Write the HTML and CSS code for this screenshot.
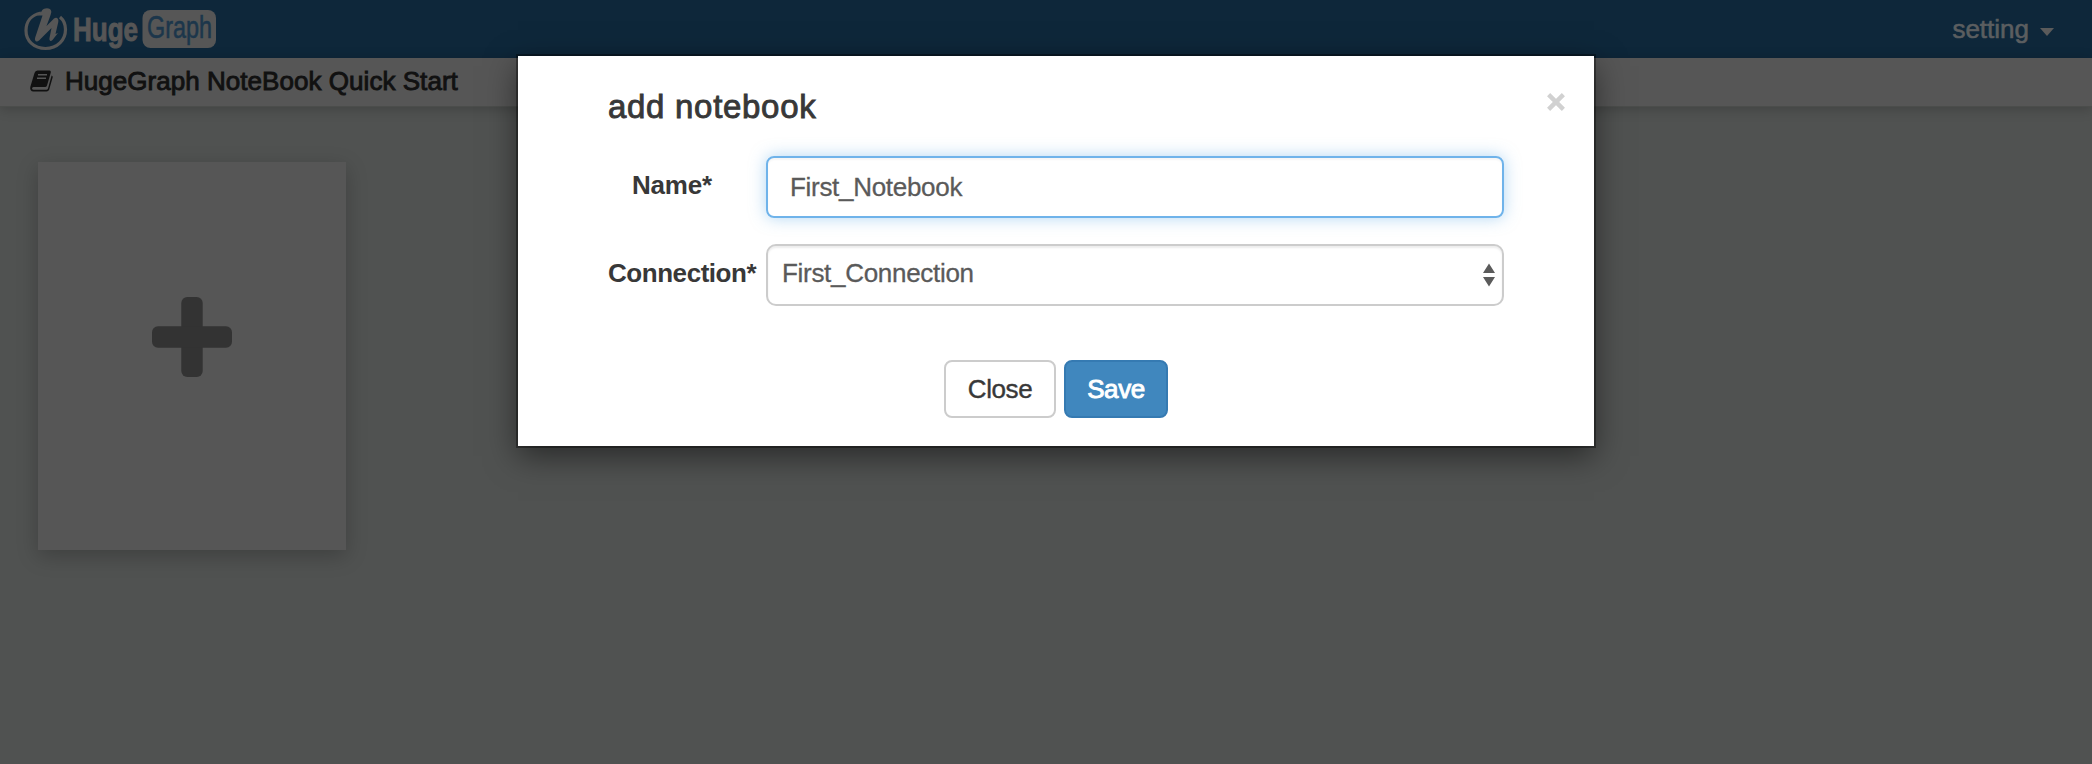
FILE: index.html
```html
<!DOCTYPE html>
<html lang="en">
<head>
<meta charset="utf-8">
<title>HugeGraph NoteBook</title>
<link rel="stylesheet" href="styles.css">
</head>
<body>
<header class="navbar">
  <svg class="logo" viewBox="0 0 200 44" role="img" aria-label="HugeGraph">
    <path d="M17 6C7 8 2 15 2 23.500C2 34 10 41.500 21.500 41.500C33.500 41.500 41.500 33 41.500 22.500C41.500 17 39.500 13 36 10" fill="none" stroke="#565656" stroke-width="3.200"/>
    <path d="M13 8.500C15.500 7.500 17 5.500 18 3.500C20 .5 27 .2 27.300 4.500C27.400 7 25 12 22.500 19L30 11.500C32.500 9.500 35 11.500 34.300 15L31.500 27L34 26L28.500 33C26.500 35 25 33.500 25.500 31L27.500 21L15 33.500C12.500 35.500 10 34 11.200 30.500L18.500 8.500Z" fill="#565656"/>
    <text class="logo-huge" x="49" y="34" textLength="65" lengthAdjust="spacingAndGlyphs">Huge</text>
    <rect x="118.500" y="3" width="73.500" height="38" rx="8" fill="#565656"/>
    <text class="logo-graph" x="123" y="31" textLength="65" lengthAdjust="spacingAndGlyphs">Graph</text>
  </svg>
  <div class="setting">setting<span class="caret"></span></div>
</header>
<nav class="subbar">
  <svg class="book" viewBox="0 0 23 22">
    <path d="M7.500 .5H19.500Q21.200 .7 20.800 2.400L17 15.500Q16.500 17 15 17H3.500Q2 17.200 2 18.500Q2.200 19.700 3.700 19.700H16.300Q17.600 19.700 18 18.400L21.600 5.500Q23 6 22.700 7.300L19.200 19.600Q18.500 21.600 16.500 21.600H3.300Q.3 21.300 .2 18.300Q.2 16.800 .8 15.200L4.500 3Q5.200 .7 7.500 .5Z" fill="#111"/>
    <path d="M8 4.800H17M7 8.200H16" stroke="#565656" stroke-width="1.400"/>
  </svg>
  <span class="subbar-title">HugeGraph NoteBook Quick Start</span>
</nav>
<main class="board">
  <div class="card">
    <svg class="plus" viewBox="0 0 80 80">
      <rect x="29.300" y="0" width="21.400" height="80" rx="6"/>
      <rect x="0" y="29.300" width="80" height="21.400" rx="6"/>
    </svg>
  </div>
</main>
<section class="modal">
  <div class="modal-head">
    <h1 class="modal-title">add notebook</h1>
    <svg class="close-x" viewBox="0 0 18 18"><path d="M1.600 1.600L16.400 16.400M16.400 1.600L1.600 16.400" stroke="#d1d1d1" stroke-width="4.400"/></svg>
  </div>
  <div class="row">
    <label class="label label-name">Name*</label>
    <div class="field focused"><span class="name-value">First_Notebook</span></div>
  </div>
  <div class="row">
    <label class="label label-conn">Connection*</label>
    <div class="field select"><span class="conn-value">First_Connection</span>
      <svg class="arrows" viewBox="0 0 12 24"><path d="M6 .5L12 10H0ZM0 14H12L6 23.500Z" fill="#5b5b5b"/></svg>
    </div>
  </div>
  <div class="actions">
    <button class="btn">Close</button>
    <button class="btn primary">Save</button>
  </div>
</section>
</body>
</html>
```
FILE: styles.css
```css
* { box-sizing: border-box; }
body {
  margin: 0;
  height: 764px;
  overflow: hidden;
  background: #505251;
  font-family: "Liberation Sans", Arial, sans-serif;
  font-size: 26px;
  color: #383838;
}
.navbar {
  display: flex;
  justify-content: space-between;
  align-items: flex-start;
  height: 58px;
  padding: 7px 38px 0 24px;
  background: #0e273a;
}
.logo { width: 200px; height: 44px; overflow: visible; }
.logo-huge {
  font: bold 33px "Liberation Sans", sans-serif;
  fill: #565656;
  stroke: #565656;
  stroke-width: 1px;
}
.logo-graph {
  font: 32px "Liberation Sans", sans-serif;
  fill: #1c364b;
  stroke: #1c364b;
  stroke-width: .6px;
}
.setting {
  display: flex;
  align-items: center;
  gap: 11px;
  height: 44px;
  color: #5b5e60;
  -webkit-text-stroke: .6px #5b5e60;
}
.caret {
  margin-top: 6px;
  border: 7px solid transparent;
  border-top: 8px solid #5b5b5b;
  border-bottom: 0;
}
.subbar {
  position: relative;
  display: flex;
  align-items: center;
  gap: 12px;
  height: 49px;
  padding: 0 0 2px 30px;
  background: #565656;
  border-bottom: 1px solid #4b4d4b;
  box-shadow: 0 2px 12px rgba(0, 0, 0, .2);
}
.book { width: 23px; height: 22px; }
.subbar-title {
  padding-top: 1px;
  color: #111;
  letter-spacing: .04px;
  -webkit-text-stroke: .9px #111;
}
.board { padding: 55px 38px; }
.card {
  display: flex;
  justify-content: center;
  width: 308px;
  height: 388px;
  padding-top: 135px;
  background: #565656;
  box-shadow: 0 6px 20px rgba(0, 0, 0, .22);
}
.plus { width: 80px; height: 80px; fill: #333; }
.modal {
  position: absolute;
  left: 518px;
  top: 56px;
  width: 1076px;
  height: 390px;
  padding: 0 90px;
  background: #fff;
  box-shadow: 0 0 0 2px rgba(0, 0, 0, .35), 0 10px 30px rgba(0, 0, 0, .5);
}
.modal-head {
  display: flex;
  justify-content: space-between;
  height: 100px;
  margin-right: -61px;
}
.modal-title {
  margin: 31px 0 0;
  font-size: 33px;
  font-weight: normal;
  line-height: 40px;
  letter-spacing: .7px;
  -webkit-text-stroke: .9px #383838;
}
.close-x { width: 18px; height: 18px; margin-top: 37px; }
.row {
  display: flex;
  height: 62px;
  margin-bottom: 26px;
}
.label {
  width: 158px;
  font-weight: bold;
  line-height: 59px;
  white-space: nowrap;
}
.label-name { padding-left: 24px; letter-spacing: -.2px; }
.label-conn { letter-spacing: -.45px; }
.field {
  display: flex;
  justify-content: space-between;
  width: 738px;
  padding: 0 22px;
  border: 2px solid #ccc;
  border-radius: 8px;
  line-height: 59px;
  letter-spacing: -.3px;
  color: #5a5a5a;
  -webkit-text-stroke: .3px #5a5a5a;
  box-shadow: inset 0 2px 2px rgba(0, 0, 0, .075);
}
.focused {
  border-color: #6fb3ea;
  box-shadow: inset 0 2px 2px rgba(0, 0, 0, .04), 0 0 16px rgba(102, 175, 233, .5);
}
.select {
  padding: 0 7px 0 14px;
  border-radius: 10px;
  line-height: 55px;
}
.arrows { width: 12px; height: 24px; margin-top: 17px; }
.actions {
  display: flex;
  justify-content: center;
  gap: 8px;
  padding-top: 28px;
}
.btn {
  width: 112px;
  height: 58px;
  padding: 1px 0 0;
  border: 2px solid #ccc;
  border-radius: 8px;
  background: #fff;
  font: 26px "Liberation Sans", Arial, sans-serif;
  letter-spacing: -.4px;
  color: #383838;
  -webkit-text-stroke: .4px;
}
.primary {
  width: 104px;
  border-color: #357ab2;
  background: #4087be;
  color: #fff;
  -webkit-text-stroke: .9px;
}
```
